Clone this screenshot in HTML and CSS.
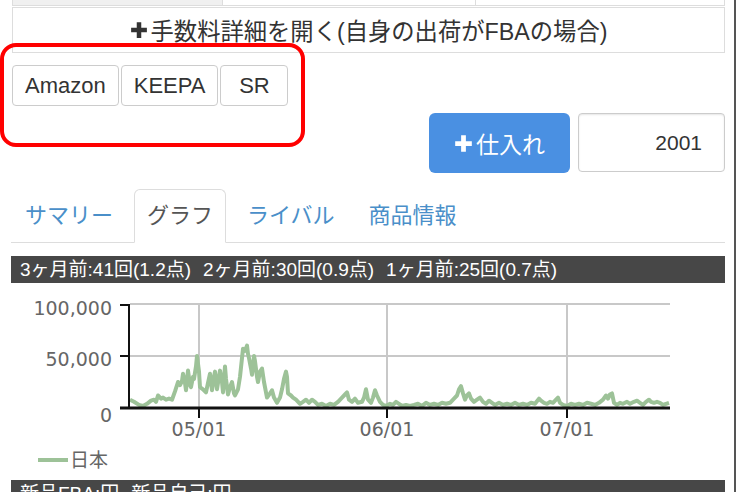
FILE: index.html
```html
<!DOCTYPE html>
<html lang="ja">
<head>
  <meta charset="UTF-8" />
  <meta name="viewport" content="width=device-width, initial-scale=1.0" />
  <title>商品詳細</title>
  <link rel="stylesheet" href="styles.css">
</head>
<body>

  <div class="page">

    <!-- 上の表の下端 -->
    <div class="table-tail">
      <div class="cell cell-gray"></div>
      <div class="cell"></div>
      <div class="cell"></div>
    </div>

    <!-- 手数料 -->
    <button class="fee-toggle">
      <svg class="icon-plus" viewBox="0 0 16 16"><path d="M6 1h4v5h5v4h-5v5H6v-5H1V6h5z"/></svg>手数料詳細を開く(自身の出荷がFBAの場合)
    </button>

    <!-- 外部リンク -->
    <div class="source-buttons">
      <button class="btn-src">Amazon</button>
      <button class="btn-src">KEEPA</button>
      <button class="btn-src">SR</button>
    </div>

    <!-- 仕入れ -->
    <div class="buy-row">
      <button class="btn-buy">
        <svg class="icon-plus" viewBox="0 0 16 16"><path d="M6 1h4v5h5v4h-5v5H6v-5H1V6h5z"/></svg>仕入れ
      </button>
      <input class="buy-qty" type="text" value="2001">
    </div>

    <!-- タブ -->
    <ul class="tabs">
      <li><a href="#">サマリー</a></li>
      <li class="active"><a href="#">グラフ</a></li>
      <li><a href="#">ライバル</a></li>
      <li><a href="#">商品情報</a></li>
    </ul>

    <div class="info-bar">
      <span>3ヶ月前:41回(1.2点)</span>
      <span>2ヶ月前:30回(0.9点)</span>
      <span>1ヶ月前:25回(0.7点)</span>
    </div>

    <!-- ランキンググラフ -->
    <svg class="chart" width="714" height="197" viewBox="11 284 714 197">
      <g class="grid">
        <line x1="130" y1="305" x2="670" y2="305" />
        <line x1="130" y1="357" x2="670" y2="357" />
        <line x1="199" y1="305" x2="199" y2="409" />
        <line x1="387" y1="305" x2="387" y2="409" />
        <line x1="567" y1="305" x2="567" y2="409" />
      </g>
      <polyline id="rank-line" class="rank-line" points="" />
      <g class="axis">
        <line x1="129" y1="305" x2="129" y2="410" />
        <line x1="120" y1="306" x2="130" y2="306" />
        <line x1="120" y1="357" x2="130" y2="357" />
        <line class="axis-zero" x1="120" y1="409" x2="670" y2="409" />
        <line x1="199" y1="409" x2="199" y2="419" />
        <line x1="387" y1="409" x2="387" y2="419" />
        <line x1="567" y1="409" x2="567" y2="419" />
      </g>
      <text x="112" y="316" text-anchor="end">100,000</text>
      <text x="112" y="367" text-anchor="end">50,000</text>
      <text x="112" y="423" text-anchor="end">0</text>
      <text x="199" y="437" text-anchor="middle">05/01</text>
      <text x="387" y="437" text-anchor="middle">06/01</text>
      <text x="567" y="437" text-anchor="middle">07/01</text>
      <line class="legend-line" x1="38" y1="461" x2="68" y2="461" />
      <text class="legend-text" x="70" y="468">日本</text>
    </svg>

    <div class="info-bar">
      <span>新品FBA:円</span>
      <span>新品自己:円</span>
    </div>

    <!-- 赤枠 -->
    <div class="highlight"></div>
  </div>

  <script>
    // x座標, ランキング(千)
    const data = [
      [130,8],[134,6],[139,3],[143,2],[147,4],[151,7],[154,8],[156,6],[158,12],[161,9],
      [163,10],[166,8],[169,9],[172,8],[175,16],[178,25],[180,22],[182,26],[183,33],[185,24],
      [186,17],[188,36],[190,22],[191,20],[193,30],[194,28],[196,40],[197,50],[199,35],[200,20],
      [203,18],[206,15],[208,24],[210,33],[212,17],[214,30],[215,35],[217,18],[219,30],[220,36],
      [222,25],[223,15],[225,40],[226,28],[228,13],[230,20],[232,25],[234,14],[235,12],[238,18],
      [240,30],[243,57],[245,55],[247,60],[248,52],[249,48],[251,38],[252,32],[254,50],[255,45],
      [257,30],[258,25],[260,35],[262,38],[264,25],[267,10],[270,14],[272,17],[274,10],[277,5],
      [280,10],[282,18],[284,28],[286,35],[287,30],[288,14],[291,12],[293,10],[296,8],[300,4],
      [303,6],[306,8],[309,5],[312,8],[315,6],[318,3],[322,4],[326,2],[330,4],[334,3],
      [338,6],[342,10],[345,13],[347,15],[349,8],[352,6],[355,9],[358,5],[362,6],[364,10],
      [366,18],[368,8],[371,5],[373,10],[375,17],[377,12],[380,6],[383,3],[386,2],[390,4],
      [393,3],[396,6],[399,4],[402,2],[406,3],[410,2],[414,3],[418,4],[422,2],[426,5],
      [430,3],[434,4],[438,3],[442,5],[446,4],[450,5],[454,9],[457,12],[459,18],[461,21],
      [463,14],[465,8],[467,12],[469,14],[471,9],[474,6],[477,8],[480,10],[483,6],[486,4],
      [489,7],[492,5],[495,3],[499,5],[503,3],[507,4],[511,3],[515,5],[519,3],[523,4],
      [527,3],[531,5],[535,4],[539,9],[541,7],[544,5],[547,4],[550,6],[553,5],[556,8],
      [558,10],[560,5],[563,3],[567,2],[571,4],[575,3],[579,4],[583,3],[587,5],[591,4],
      [595,3],[599,5],[603,8],[606,12],[608,9],[610,13],[612,14],[614,5],[617,3],[620,5],
      [623,4],[627,6],[630,4],[634,6],[637,7],[640,5],[643,3],[646,6],[649,8],[651,6],
      [654,5],[657,6],[660,5],[663,3],[666,4],[669,5]
    ];

    const zeroY = 409;
    const scale = 1.04; // 1000あたりのpx

    const points = data.map(([x, v]) => `${x},${(zeroY - v * scale).toFixed(1)}`).join(" ");
    document.getElementById("rank-line").setAttribute("points", points);
  </script>

</body>
</html>
```

FILE: styles.css
```css
body {
  margin: 0;
  background-color: #fff;
  font-family: "Liberation Sans", "Noto Sans CJK JP", sans-serif;
  color: #333;
}

.page {
  position: relative;
  width: 736px;
  box-sizing: border-box;
  padding: 0 9px 0 11px;
  border-right: 2px solid #555;
  height: 492px;
  overflow: hidden;
}

/* 上の表 */
.table-tail {
  display: grid;
  grid-template-columns: 210px 253px 1fr;
  height: 5px;
  margin-left: 1px;
  border-bottom: 1px solid #ddd;
}

.cell {
  border-left: 1px solid #ddd;
}

.cell:last-child {
  border-right: 1px solid #ddd;
}

.cell-gray {
  background-color: #f0f0f0;
}

/* 手数料ボタン */
.fee-toggle {
  display: flex;
  align-items: center;
  justify-content: center;
  width: calc(100% - 1px);
  height: 46px;
  margin: 1px 0 0 1px;
  padding: 0;
  border: 1px solid #ddd;
  background-color: #fff;
  font-family: inherit;
  font-size: 23.3px;
  color: #333;
}

.icon-plus {
  width: 18px;
  height: 18px;
  fill: currentColor;
  margin-right: 3px;
}

/* Amazon / KEEPA / SR */
.source-buttons {
  display: flex;
  gap: 2px;
  margin-top: 12px;
  margin-left: 1px;
}

.btn-src {
  height: 41px;
  min-width: 68px;
  padding: 0 12px;
  border: 1px solid #ccc;
  border-radius: 4px;
  background-color: #fff;
  font-family: inherit;
  font-size: 22px;
  color: #333;
}

/* 仕入れ */
.buy-row {
  display: flex;
  justify-content: flex-end;
  gap: 8px;
  margin-top: 7px;
}

.btn-buy {
  display: flex;
  align-items: center;
  justify-content: center;
  width: 141px;
  height: 60px;
  padding: 0;
  border: none;
  border-radius: 6px;
  background-color: #4a90e2;
  color: #fff;
  font-family: inherit;
  font-size: 23px;
}

.btn-buy .icon-plus {
  width: 19px;
  height: 19px;
  margin-right: 3px;
}

.buy-qty {
  width: 147px;
  height: 59px;
  box-sizing: border-box;
  padding: 0 22px 0 10px;
  border: 1px solid #ccc;
  border-radius: 4px;
  box-shadow: inset 0 1px 2px rgba(0, 0, 0, 0.1);
  text-align: right;
  font-family: inherit;
  font-size: 21px;
  color: #333;
}

/* タブ */
.tabs {
  display: flex;
  gap: 8px;
  list-style: none;
  margin: 16px 0 0;
  padding: 0 0 0 1px;
  border-bottom: 1px solid #ddd;
}

.tabs li {
  margin-bottom: -1px;
}

.tabs a {
  display: block;
  height: 54px;
  box-sizing: border-box;
  padding: 0 12px;
  line-height: 52px;
  font-size: 22px;
  color: #4a8fc9;
  text-decoration: none;
  border: 1px solid transparent;
  border-radius: 6px 6px 0 0;
}

.tabs .active a {
  color: #555;
  background-color: #fff;
  border-color: #ddd #ddd #fff;
}

/* 黒帯 */
.info-bar {
  display: flex;
  gap: 12px;
  height: 27px;
  margin-top: 13px;
  padding-left: 9px;
  background-color: #474747;
  color: #fff;
  font-size: 19px;
  line-height: 27px;
  white-space: nowrap;
}

.chart + .info-bar {
  margin-top: 0;
}

/* グラフ */
.chart {
  display: block;
}

.chart .grid line {
  stroke: #c8c8c8;
  stroke-width: 2;
}

.chart .axis line {
  stroke: #111;
  stroke-width: 2;
}

.chart .axis .axis-zero {
  stroke-width: 3;
}

.rank-line {
  fill: none;
  stroke: #9dc298;
  stroke-width: 4;
  stroke-linejoin: round;
}

.chart text {
  font-family: "DejaVu Sans", sans-serif;
  font-size: 19px;
  fill: #666;
}

.chart .legend-text {
  font-family: "Noto Sans CJK JP", sans-serif;
}

.legend-line {
  stroke: #9dc298;
  stroke-width: 4;
}

/* 赤枠 */
.highlight {
  position: absolute;
  left: 0;
  top: 43px;
  width: 305px;
  height: 104px;
  box-sizing: border-box;
  border: 4px solid #f00;
  border-radius: 16px;
  pointer-events: none;
}
```
